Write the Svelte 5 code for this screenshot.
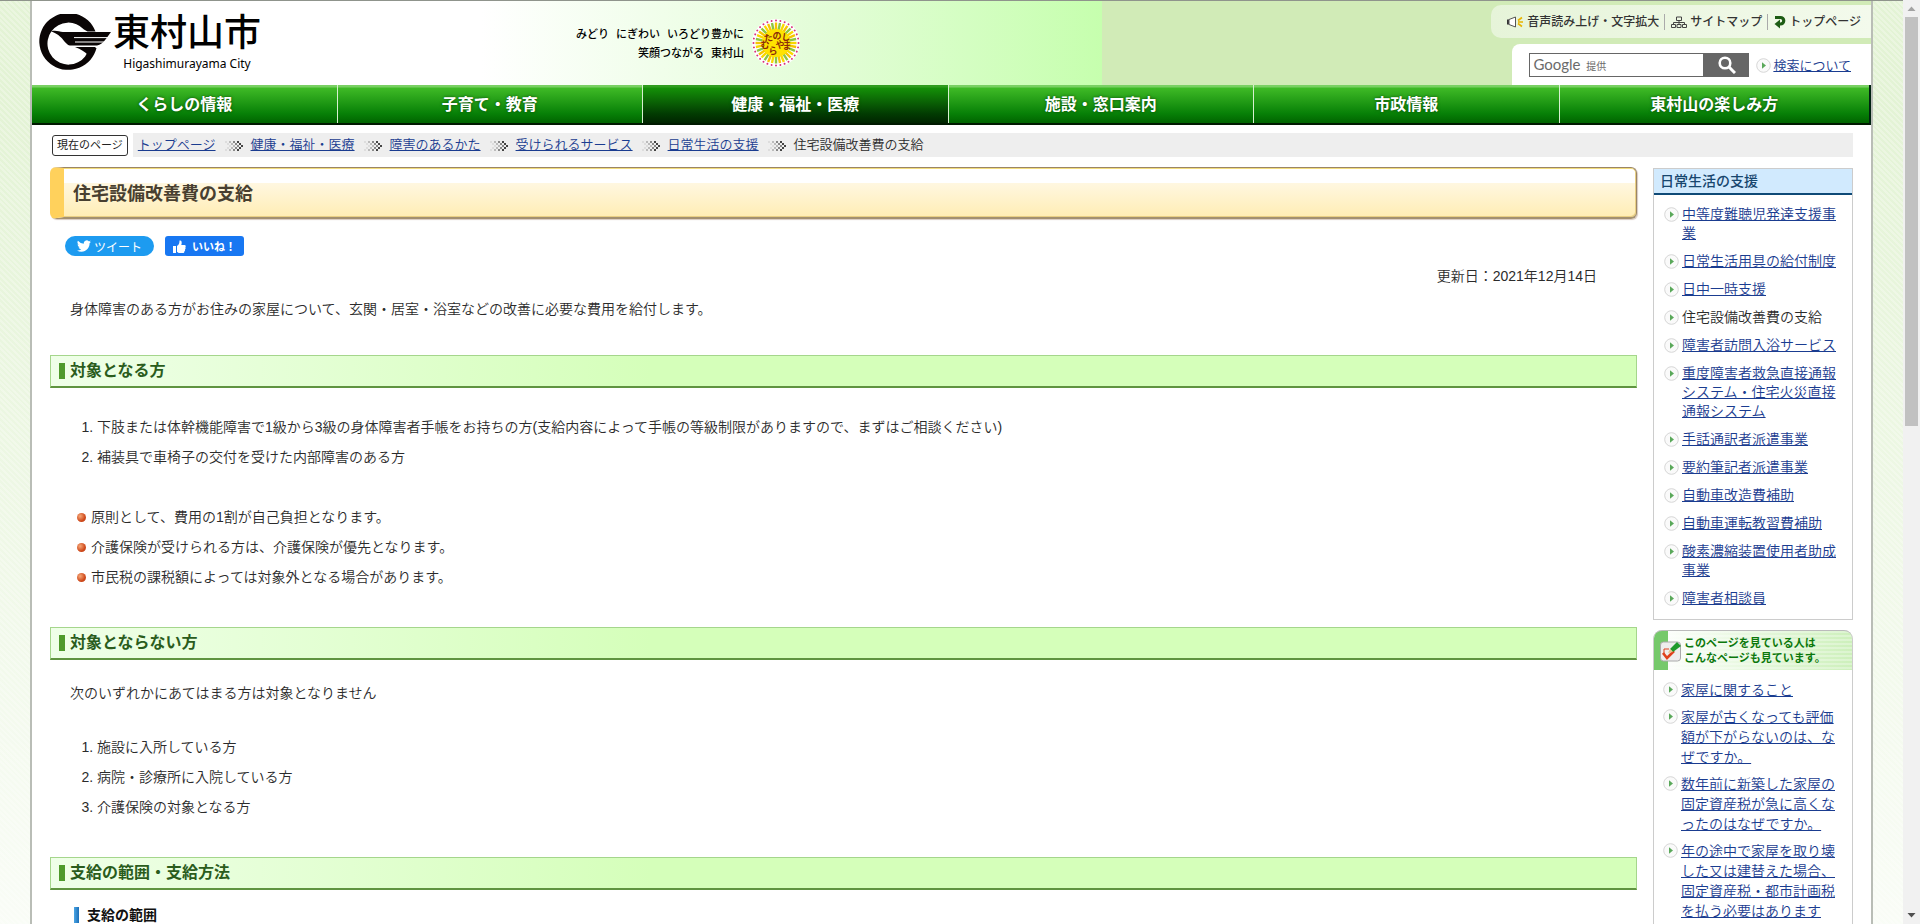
<script>
    const menu = [
        "くらしの情報",
        "子育て・教育",
        "健康・福祉・医療",
        "施設・窓口案内",
        "市政情報",
        "東村山の楽しみ方",
    ];
    let atual = "健康・福祉・医療";

    const pankuzu = [
        "トップページ",
        "健康・福祉・医療",
        "障害のあるかた",
        "受けられるサービス",
        "日常生活の支援",
    ];
    const titulo = "住宅設備改善費の支給";

    const shien = [
        "中等度難聴児発達支援事業",
        "日常生活用具の給付制度",
        "日中一時支援",
        "住宅設備改善費の支給",
        "障害者訪問入浴サービス",
        "重度障害者救急直接通報システム・住宅火災直接通報システム",
        "手話通訳者派遣事業",
        "要約筆記者派遣事業",
        "自動車改造費補助",
        "自動車運転教習費補助",
        "酸素濃縮装置使用者助成事業",
        "障害者相談員",
    ];

    const kanren = [
        "家屋に関すること",
        "家屋が古くなっても評価額が下がらないのは、なぜですか。",
        "数年前に新築した家屋の固定資産税が急に高くなったのはなぜですか。",
        "年の途中で家屋を取り壊した又は建替えた場合、固定資産税・都市計画税を払う必要はあります",
    ];

    // sun rays around the town mark
    const rays = Array.from({ length: 32 }, (_, i) => i * 11.25);
    const rayColors = ["#f6c500", "#8cc63f", "#f9d800"];

    // dots of the breadcrumb arrow: [x, y, shade]
    const dots = [];
    const shades = ["#ddd", "#bbb", "#888", "#444"];
    for (let c = 0; c < 4; c++) {
        for (let r = 0; r < 5; r++) {
            dots.push([c * 4 + (2 - Math.abs(r - 2)) * 2, r * 2, shades[c]]);
        }
    }

    let busca = "";
</script>

{#snippet seta()}
    <svg class="seta" viewBox="0 0 15 15" width="15" height="15" aria-hidden="true">
        <circle cx="7.5" cy="7.5" r="6.8" fill="#fafafa" stroke="#d6d6d6" />
        <path d="M6 4.2 10 7.5 6 10.8z" fill="#5aa85a" />
    </svg>
{/snippet}

<div class="window">
    <div class="viewport">
        <div class="page">
            <header>
                <a class="logo" href="#top">
                    <svg viewBox="0 0 74 58" width="74" height="58" aria-hidden="true">
                        <path
                            d="M56.5 17.5A29 28.5 0 1 0 57.5 34L50 34A21 21 0 1 1 45 15.5L48.5 17.5z"
                            fill="#0a0505"
                        />
                        <path
                            d="M12 17.2C17 16 20 17.5 24 18H72C68 23 65 30 58 31.5H31C25 30 25 22 12 17.2z"
                            fill="#0a0505"
                        />
                        <path d="M35 23.6H69M36 28H66" stroke="#fff" stroke-width="1" />
                        <path d="M36 33H57L49 41C46 38 42 35 36 33z" fill="#0a0505" />
                    </svg>
                    <span class="nome">
                        <strong>東村山市</strong>
                        <small>Higashimurayama City</small>
                    </span>
                </a>

                <div class="lema">
                    <p><span>みどり</span><span>にぎわい</span><span>いろどり豊かに</span></p>
                    <p><span>笑顔つながる</span><span>東村山</span></p>
                </div>
                <svg class="sol" viewBox="-24 -24 48 48" width="48" height="48" aria-hidden="true">
                    <circle r="24" fill="#fff" />
                    {#each rays as ang, i}
                        <path
                            d="M0 -11V-20.5"
                            stroke={rayColors[i % 3]}
                            stroke-width="2.4"
                            transform="rotate({ang})"
                        />
                        <circle cy="-22.5" r="1" fill="#d8327a" transform="rotate({ang})" />
                    {/each}
                    <circle r="14" fill="#ffe200" />
                    <g class="sol-texto">
                        <text x="-7" y="-3" transform="rotate(-8)">た</text>
                        <text x="1" y="-4">の</text>
                        <text x="9" y="-4" transform="rotate(8)">し</text>
                        <text x="-11" y="5">む</text>
                        <text x="-3" y="11">ら</text>
                        <text x="4" y="5">や</text>
                        <text x="11" y="6">ま</text>
                    </g>
                </svg>

                <div class="ferramentas">
                    <ul class="util">
                        <li>
                            <a href="#voz">
                                <svg viewBox="0 0 18 12" width="18" height="12" aria-hidden="true">
                                    <path d="M1 3.5H3V8.5H1z" fill="#333" />
                                    <path d="M3 3.5 9.5 1V11L3 8.5z" fill="#fff" stroke="#555" />
                                    <path d="M12 4.5 16 1.5M12 6H17M12 7.5 16 10.5" stroke="#e8b400" stroke-width="1.6" />
                                </svg>音声読み上げ・文字拡大</a
                            >
                        </li>
                        <li>
                            <a href="#mapa">
                                <svg viewBox="0 0 16 12" width="16" height="12" aria-hidden="true">
                                    <path
                                        d="M5.5 1H10.5V4.5H5.5zM.5 8.5H4.5V11.5H.5zM6 8.5H10V11.5H6zM11.5 8.5H15.5V11.5H11.5zM8 4.5V8.5M2.5 8.5V6.5H13.5V8.5"
                                        fill="none"
                                        stroke="#444"
                                    />
                                </svg>サイトマップ</a
                            >
                        </li>
                        <li>
                            <a href="#top">
                                <svg viewBox="0 0 12 14" width="12" height="14" aria-hidden="true">
                                    <path d="M1 2.5H6.5A3 3 0 0 1 6.5 9H5" fill="none" stroke="#1d5c14" stroke-width="3.2" />
                                    <path d="M6 4.5V13.5L.5 9z" fill="#1d5c14" />
                                </svg>トップページ</a
                            >
                        </li>
                    </ul>
                    <form class="busca" on:submit|preventDefault>
                        <div class="campo">
                            <input id="q" type="text" bind:value={busca} />
                            {#if !busca}
                                <label for="q">Google <small>提供</small></label>
                            {/if}
                        </div>
                        <button aria-label="検索">
                            <svg viewBox="0 0 18 18" width="18" height="18" aria-hidden="true">
                                <circle cx="7" cy="7" r="5.3" fill="none" stroke="#fff" stroke-width="2.6" />
                                <path d="M11 11 17 17" stroke="#fff" stroke-width="3" />
                            </svg>
                        </button>
                        <a href="#busca">{@render seta()}<span>検索について</span></a>
                    </form>
                </div>
            </header>

            <nav class="menu">
                {#each menu as item}
                    <a href="#menu" class:ativo={item === atual}>{item}</a>
                {/each}
            </nav>

            <div class="pankuzu">
                <span class="rotulo">現在のページ</span>
                <p>
                    {#each pankuzu as item}
                        <a href="#pankuzu">{item}</a>
                        <svg viewBox="0 0 18 10" width="18" height="10" aria-hidden="true">
                            {#each dots as [x, y, cor]}
                                <rect {x} {y} width="2" height="2" fill={cor} />
                            {/each}
                        </svg>
                    {/each}
                    <span>{titulo}</span>
                </p>
            </div>

            <div class="corpo">
                <main>
                    <h1>{titulo}</h1>

                    <div class="social">
                        <button class="tweet">
                            <svg viewBox="0 0 24 24" width="14" height="14" aria-hidden="true">
                                <path
                                    fill="#fff"
                                    d="M23.95 4.57a10 10 0 0 1-2.82.77 4.96 4.96 0 0 0 2.16-2.72 9.9 9.9 0 0 1-3.13 1.18 4.92 4.92 0 0 0-8.38 4.48A13.9 13.9 0 0 1 1.64 3.16a4.92 4.92 0 0 0 1.52 6.57 4.9 4.9 0 0 1-2.23-.61v.06a4.92 4.92 0 0 0 3.95 4.83 5 5 0 0 1-2.21.08 4.94 4.94 0 0 0 4.6 3.42A9.87 9.87 0 0 1 0 19.54a14 14 0 0 0 7.55 2.21c9.05 0 14-7.5 14-13.98 0-.21 0-.42-.02-.63a9.9 9.9 0 0 0 2.42-2.57z"
                                />
                            </svg>ツイート
                        </button>
                        <button class="like">
                            <svg viewBox="0 0 13 13" width="13" height="13" aria-hidden="true">
                                <path
                                    fill="#fff"
                                    d="M0 6H3V13H0zM4 6C6 5 6.5 3 6.5 .5C8.5 0 9.3 2 8.3 5H11.5C13 5 13 6.8 12.3 7.2C12.9 8 12.6 9 12 9.3C12.3 10.2 12 11 11.4 11.2C11.5 12.3 11 13 10 13H6.5C5.5 13 5 12.4 4 12z"
                                />
                            </svg>いいね！
                        </button>
                    </div>

                    <p class="data">更新日：2021年12月14日</p>
                    <p>身体障害のある方がお住みの家屋について、玄関・居室・浴室などの改善に必要な費用を給付します。</p>

                    <h2>対象となる方</h2>
                    <ol>
                        <li>下肢または体幹機能障害で1級から3級の身体障害者手帳をお持ちの方(支給内容によって手帳の等級制限がありますので、まずはご相談ください)</li>
                        <li>補装具で車椅子の交付を受けた内部障害のある方</li>
                    </ol>
                    <ul>
                        <li>原則として、費用の1割が自己負担となります。</li>
                        <li>介護保険が受けられる方は、介護保険が優先となります。</li>
                        <li>市民税の課税額によっては対象外となる場合があります。</li>
                    </ul>

                    <h2>対象とならない方</h2>
                    <p>次のいずれかにあてはまる方は対象となりません</p>
                    <ol>
                        <li>施設に入所している方</li>
                        <li>病院・診療所に入院している方</li>
                        <li>介護保険の対象となる方</li>
                    </ol>

                    <h2>支給の範囲・支給方法</h2>
                    <h3>支給の範囲</h3>
                </main>

                <aside>
                    <section class="caixa">
                        <h2>日常生活の支援</h2>
                        <ul>
                            {#each shien as item}
                                <li>
                                    {@render seta()}
                                    {#if item === titulo}
                                        <span>{item}</span>
                                    {:else}
                                        <a href="#shien">{item}</a>
                                    {/if}
                                </li>
                            {/each}
                        </ul>
                    </section>

                    <section class="caixa kanren">
                        <h2>
                            <svg viewBox="0 0 22 22" width="22" height="22" aria-hidden="true">
                                <rect x=".5" y="2" width="20" height="19" rx="3" fill="#eee" stroke="#aaa" />
                                <path d="M3 13 7 18 14 11" fill="none" stroke="#e0401c" stroke-width="2.6" />
                                <path d="M9 9H4V14" fill="none" stroke="#e0401c" />
                                <path d="M10 9 17 2 21 6 13 12z" fill="#1f9a2c" />
                                <path d="M10 9 13 12 8 13z" fill="#e9c48a" />
                            </svg>
                            <span>このページを見ている人は<br />こんなページも見ています。</span>
                        </h2>
                        <ul>
                            {#each kanren as item}
                                <li>{@render seta()}<a href="#kanren">{item}</a></li>
                            {/each}
                        </ul>
                    </section>
                </aside>
            </div>
        </div>
    </div>

    <div class="scrollbar" aria-hidden="true">
        <svg viewBox="0 0 17 17" width="17" height="17"><path d="M4.5 11H12.5L8.5 6.5z" fill="#a3a3a3" /></svg>
        <div class="trilho"><div class="polegar"></div></div>
        <svg viewBox="0 0 17 17" width="17" height="17"><path d="M4.5 6H12.5L8.5 10.5z" fill="#505050" /></svg>
    </div>
</div>

<style>
    :global(body) {
        margin: 0;
        overflow: hidden;
    }

    h1,
    h2,
    h3,
    p,
    ul,
    ol {
        margin: 0;
        padding: 0;
    }

    .window {
        display: flex;
        height: 100vh;
        color: #2b2b2b;
        font-family: "Liberation Sans", "Noto Sans CJK JP", sans-serif;
        font-size: 14px;
        font-weight: 350;
    }

    .viewport {
        flex: 1;
        overflow: hidden;
        padding: 0 30px;
        border-top: 1px solid #8f948c;
        background:
            linear-gradient(rgba(255, 255, 255, 0) 100px, rgba(255, 255, 255, 0.8) 100%),
            repeating-linear-gradient(45deg, #e3f3d5 0 2px, #ebf6e0 2px 4px);
    }

    .page {
        min-height: 100%;
        background: #fff;
        border: 2px solid #b9bdb6;
        border-width: 0 2px;
    }

    a {
        color: #1a3c90;
    }

    header {
        display: flex;
        height: 84px;
        background:
            linear-gradient(to right, #fff 42%, #e2fdd6 75%, #c6ffae) no-repeat 0 0 / 1070px 100%,
            #d1ebb7;
    }

    .logo {
        display: flex;
        padding: 13px 0 0 7px;
        color: #000;
        text-decoration: none;
    }

    .nome {
        display: flex;
        flex-direction: column;
        align-items: center;
    }

    .nome strong {
        font-size: 37px;
        line-height: 40px;
        font-weight: 500;
    }

    .nome small {
        font-family: "Noto Sans", sans-serif;
        font-size: 12px;
        font-weight: 400;
        line-height: 20px;
    }

    .lema {
        margin-left: 315px;
        padding-top: 24px;
        color: #000;
        font-size: 11px;
        font-weight: 500;
        line-height: 19px;
    }

    .lema p {
        display: flex;
        justify-content: flex-end;
        gap: 7px;
    }

    .sol {
        margin: 18px 0 0 8px;
    }

    .sol-texto {
        fill: #8a2a0a;
        font-size: 9px;
        font-weight: bold;
        text-anchor: middle;
    }

    .ferramentas {
        display: flex;
        flex-direction: column;
        align-items: flex-end;
        margin-left: auto;
        padding-top: 4px;
    }

    .util {
        display: flex;
        align-items: center;
        height: 33px;
        box-sizing: border-box;
        padding: 0 10px 0 15px;
        border-radius: 10px 0 0 10px;
        background: linear-gradient(to right, #e6f4d9, #f3faec);
        list-style: none;
        font-size: 12px;
        font-weight: 500;
    }

    .util li + li {
        margin-left: 5px;
        padding-left: 6px;
        border-left: 1px solid #aaa;
    }

    .util a {
        display: flex;
        align-items: center;
        gap: 3px;
        color: #333;
        line-height: 16px;
        text-decoration: none;
    }

    .busca {
        display: flex;
        align-items: center;
        height: 41px;
        margin-top: 6px;
        padding: 0 20px 0 17px;
        border-radius: 8px 0 0 0;
        background: #fff;
    }

    .campo {
        position: relative;
    }

    .campo input {
        display: block;
        width: 175px;
        height: 24px;
        box-sizing: border-box;
        padding: 0 4px;
        border: 1px solid #666;
        outline: none;
    }

    .campo label {
        position: absolute;
        left: 4px;
        top: 1px;
        color: #6b6b6b;
        font-family: Lato, "Noto Sans CJK JP", sans-serif;
        font-size: 15px;
        font-weight: 400;
        line-height: 20px;
        pointer-events: none;
    }

    .campo small {
        margin-left: 2px;
        font-size: 10px;
    }

    .busca button {
        display: flex;
        align-items: center;
        justify-content: center;
        width: 45px;
        height: 24px;
        padding: 0;
        border: 0;
        background: #666;
    }

    .busca a {
        display: flex;
        align-items: center;
        gap: 2px;
        margin-left: 7px;
        font-size: 13px;
        text-decoration: none;
    }

    .busca a span {
        text-decoration: underline;
    }

    .menu {
        display: grid;
        grid-template-columns: repeat(5, 306fr) 310fr;
        border-right: 2px solid #021;
        border-bottom: 2px solid #001a00;
        background: linear-gradient(#79d063 0 2px, #3fba26 3px, #078007 75%, #006400);
    }

    .menu a {
        padding-top: 1px;
        border-right: 1px solid #d7f0d0;
        color: #fff;
        font-size: 16px;
        font-weight: bold;
        line-height: 37px;
        text-align: center;
        text-decoration: none;
        text-shadow: 0 0 3px #0a4a0a;
    }

    .menu a:last-child {
        border-right: 0;
    }

    .menu .ativo {
        background: linear-gradient(#2f9c1e 0 2px, #149008 3px, #023c02 75%, #002400);
    }

    .pankuzu {
        display: flex;
        align-items: center;
        gap: 5px;
        margin: 8px 18px 0 20px;
    }

    .rotulo {
        padding: 0 4px;
        border: 1px solid #333;
        border-radius: 3px;
        color: #222;
        font-size: 11px;
        font-weight: 400;
        line-height: 19px;
    }

    .pankuzu p {
        display: flex;
        flex: 1;
        align-items: center;
        padding-left: 5px;
        background: #eee;
        font-size: 13px;
        line-height: 24px;
    }

    .pankuzu svg {
        margin: 2px 8px 0 9px;
    }

    .corpo {
        display: flex;
        align-items: flex-start;
        gap: 16px;
        margin: 10px 18px 0;
    }

    main {
        flex: 1;
    }

    main h1 {
        padding: 3px 0 0 9px;
        border: 1px solid #9a8566;
        border-left: 14px solid #ffd15c;
        border-bottom: 2px solid #a3906f;
        border-radius: 6px;
        box-shadow: inset 0 1px #f2dc7c, inset -1px -1px #e9cf84, 1px 1px 1px #d8c9c0;
        background: linear-gradient(#fff 30%, #fff7e0 31%, #ffedb4);
        color: #483f30;
        font-size: 18px;
        line-height: 46px;
    }

    .social {
        display: flex;
        gap: 11px;
        margin: 17px 0 8px 15px;
    }

    .social button {
        display: flex;
        align-items: center;
        height: 20px;
        border: 0;
        color: #fff;
        font: inherit;
    }

    .social .tweet {
        gap: 3px;
        padding: 0 12px;
        border-radius: 10px;
        background: #1d9bf0;
        font-size: 12px;
        font-weight: 400;
    }

    .social .like {
        gap: 6px;
        padding: 0 8px;
        border-radius: 3px;
        background: #1877f2;
        font-size: 11px;
        font-weight: bold;
    }

    main p {
        padding-left: 20px;
        line-height: 22px;
    }

    main .data {
        margin-bottom: 10px;
        padding-right: 40px;
        line-height: 24px;
        text-align: right;
    }

    main h2 {
        display: flex;
        align-items: center;
        gap: 5px;
        margin: 35px 0 15px;
        padding-left: 8px;
        border: 1px solid #a5d68c;
        border-bottom: 2px solid #5f9440;
        background: linear-gradient(to right, #efffe8, #d5ffba 600px);
        color: #2a5c1c;
        font-size: 16px;
        line-height: 30px;
    }

    main h2::before {
        content: "";
        width: 6px;
        height: 16px;
        background: #4f9a2c;
    }

    main h3 {
        display: flex;
        align-items: center;
        gap: 8px;
        margin-left: 24px;
        color: #111;
        font-size: 14px;
        line-height: 20px;
    }

    main h3::before {
        content: "";
        width: 5px;
        height: 16px;
        background: linear-gradient(to right, #4aa5e4, #1c6fb8);
    }

    main h2 + p {
        margin-top: 22px;
    }

    main ol,
    main ul {
        margin: 24px 0 30px;
        line-height: 30px;
    }

    main ol {
        padding-left: 47px;
    }

    main p + ol {
        margin-top: 28px;
    }

    main ul {
        padding-left: 27px;
        list-style: none;
    }

    main ul li {
        display: flex;
        align-items: center;
        gap: 5px;
    }

    main ul li::before {
        content: "";
        width: 9px;
        height: 9px;
        border-radius: 50%;
        background: radial-gradient(circle at 35% 35%, #f6a878, #cf4a1c 60%, #b83c12);
    }

    aside {
        display: grid;
        gap: 10px;
        width: 200px;
        margin-top: 1px;
    }

    .caixa {
        border: 1px solid #ccc;
    }

    .caixa h2 {
        padding-left: 6px;
        border-bottom: 2px solid #0f4a77;
        background: #d1eafe;
        color: #17466e;
        font-size: 14px;
        font-weight: 500;
        line-height: 24px;
    }

    .caixa ul {
        display: grid;
        gap: 9px;
        padding: 10px 14px 11px 10px;
        line-height: 19px;
        list-style: none;
    }

    .caixa li {
        display: flex;
        align-items: flex-start;
        gap: 3px;
    }

    .seta {
        flex: none;
        margin-top: 2px;
    }

    .kanren {
        border-top: 0;
        border-radius: 9px 9px 0 0;
    }

    .kanren h2 {
        display: flex;
        align-items: center;
        gap: 2px;
        height: 39px;
        border: 0;
        border-top: 1px solid #bbb;
        border-radius: 8px 8px 0 0;
        background:
            linear-gradient(#76c96b, #76c96b) no-repeat 0 0 / 14px 100%,
            repeating-linear-gradient(rgba(255, 255, 255, 0.3) 0 2px, rgba(255, 255, 255, 0) 2px 4px),
            linear-gradient(to right, #fff, #cdf0bb);
        color: #0c780c;
        font-size: 11px;
        font-weight: bold;
        line-height: 15px;
    }

    .kanren h2 span {
        white-space: nowrap;
    }

    .kanren ul {
        gap: 7px;
        padding-left: 9px;
        line-height: 20px;
    }

    .scrollbar {
        display: flex;
        flex-direction: column;
        width: 17px;
        background: #f1f1f1;
    }

    .trilho {
        flex: 1;
        padding: 0 2px;
    }

    .polegar {
        height: 46%;
        background: #c1c1c1;
    }
</style>
